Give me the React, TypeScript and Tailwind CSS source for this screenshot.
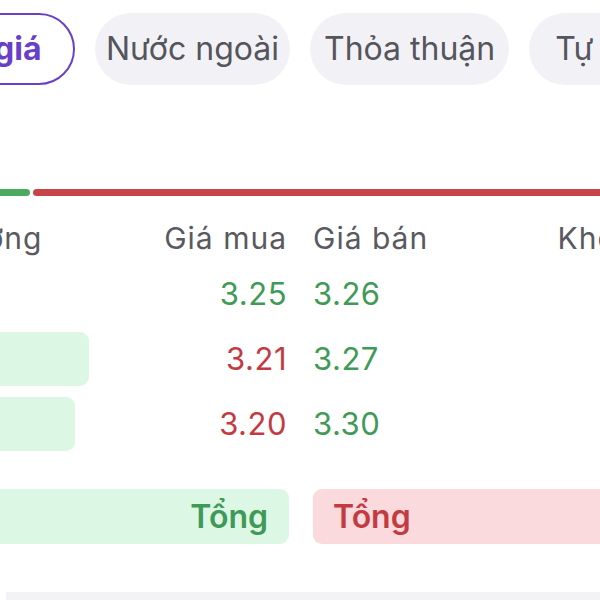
import React from "react";

const font = { fontFamily: "Inter, 'Noto Sans', sans-serif" };

type Row = { buy: string; buyColor: "g" | "r"; buyBar: number; sell: string; sellColor: "g" | "r"; sellBar: number };

const rows: Row[] = [
  { buy: "3.25", buyColor: "g", buyBar: 90, sell: "3.26", sellColor: "g", sellBar: 80 },
  { buy: "3.21", buyColor: "r", buyBar: 214, sell: "3.27", sellColor: "g", sellBar: 100 },
  { buy: "3.20", buyColor: "r", buyBar: 200, sell: "3.30", sellColor: "g", sellBar: 60 },
];

function colorClass(c: "g" | "r") {
  return c === "g" ? "text-[#3f9a58]" : "text-[#c33b42]";
}

export default function App() {
  return (
    <div className="w-[600px] h-[600px] overflow-hidden bg-white" style={font}>
      {/* Tabs */}
      <div className="flex gap-[20px] pt-[13px] ml-[-126px] whitespace-nowrap">
        <div className="w-[201px] h-[72px] shrink-0 rounded-full border-2 border-[#6a3fc8] flex items-center justify-center">
          <span className="text-[32px] font-bold text-[#6a3fc8] leading-none">Bước giá</span>
        </div>
        <div className="h-[72px] shrink-0 rounded-full bg-[#f2f2f6] px-[11px] flex items-center">
          <span className="text-[32px] text-[#55555c] leading-none">Nước ngoài</span>
        </div>
        <div className="h-[72px] shrink-0 rounded-full bg-[#f2f2f6] px-[14px] flex items-center">
          <span className="text-[32px] text-[#55555c] leading-none">Thỏa thuận</span>
        </div>
        <div className="h-[72px] shrink-0 rounded-full bg-[#f2f2f6] px-[26px] flex items-center">
          <span className="text-[32px] text-[#55555c] leading-none">Tự doanh</span>
        </div>
      </div>

      <div className="ml-[-125px] w-[852px]">
        {/* ratio bar */}
        <div className="mt-[104px] flex gap-[3px] h-[7px]">
          <div className="w-[155px] rounded-full bg-[#4caa5e]" />
          <div className="flex-1 rounded-full bg-[#c8444b]" />
        </div>

        {/* header */}
        <div className="mt-[17px] h-[50px] grid grid-cols-2 gap-x-[24px] text-[30px] tracking-[1px] text-[#59595f]">
          <div className="flex items-center justify-between pl-[7px] pr-[2px]">
            <span>Khối lượng</span>
            <span>Giá mua</span>
          </div>
          <div className="flex items-center justify-between pr-[9px]">
            <span>Giá bán</span>
            <span>Khối lượng</span>
          </div>
        </div>

        {/* rows */}
        <div className="mt-[4px] flex flex-col gap-[11px]">
          {rows.map((r, i) => (
            <div key={i} className="grid grid-cols-2 gap-x-[24px] h-[54px]">
              <div className="relative flex items-center justify-end pr-[2px]">
                <div
                  className="absolute left-0 top-0 bottom-0 rounded-[9px] bg-[#dcf7e3]"
                  style={{ width: r.buyBar }}
                />
                <span className={`relative text-[31px] tracking-[0.5px] ${colorClass(r.buyColor)}`}>{r.buy}</span>
              </div>
              <div className="relative flex items-center justify-start">
                <div
                  className="absolute right-0 top-0 bottom-0 rounded-[9px] bg-[#fadadd]"
                  style={{ width: r.sellBar }}
                />
                <span className={`relative text-[31px] tracking-[0.5px] ${colorClass(r.sellColor)}`}>{r.sell}</span>
              </div>
            </div>
          ))}
        </div>

        {/* totals */}
        <div className="mt-[38px] grid grid-cols-2 gap-x-[24px] h-[55px]">
          <div className="rounded-[9px] bg-[#dcf7e3] flex items-center justify-end pr-[21px]">
            <span className="text-[32px] font-semibold text-[#3f9a58]">Tổng</span>
          </div>
          <div className="rounded-[9px] bg-[#fadadd] flex items-center pl-[20px]">
            <span className="text-[32px] font-semibold text-[#c33b42]">Tổng</span>
          </div>
        </div>
      </div>

      {/* bottom strip */}
      <div className="mt-[48px] ml-[6px] h-[8px] bg-[#f3f3f6]" />
    </div>
  );
}
